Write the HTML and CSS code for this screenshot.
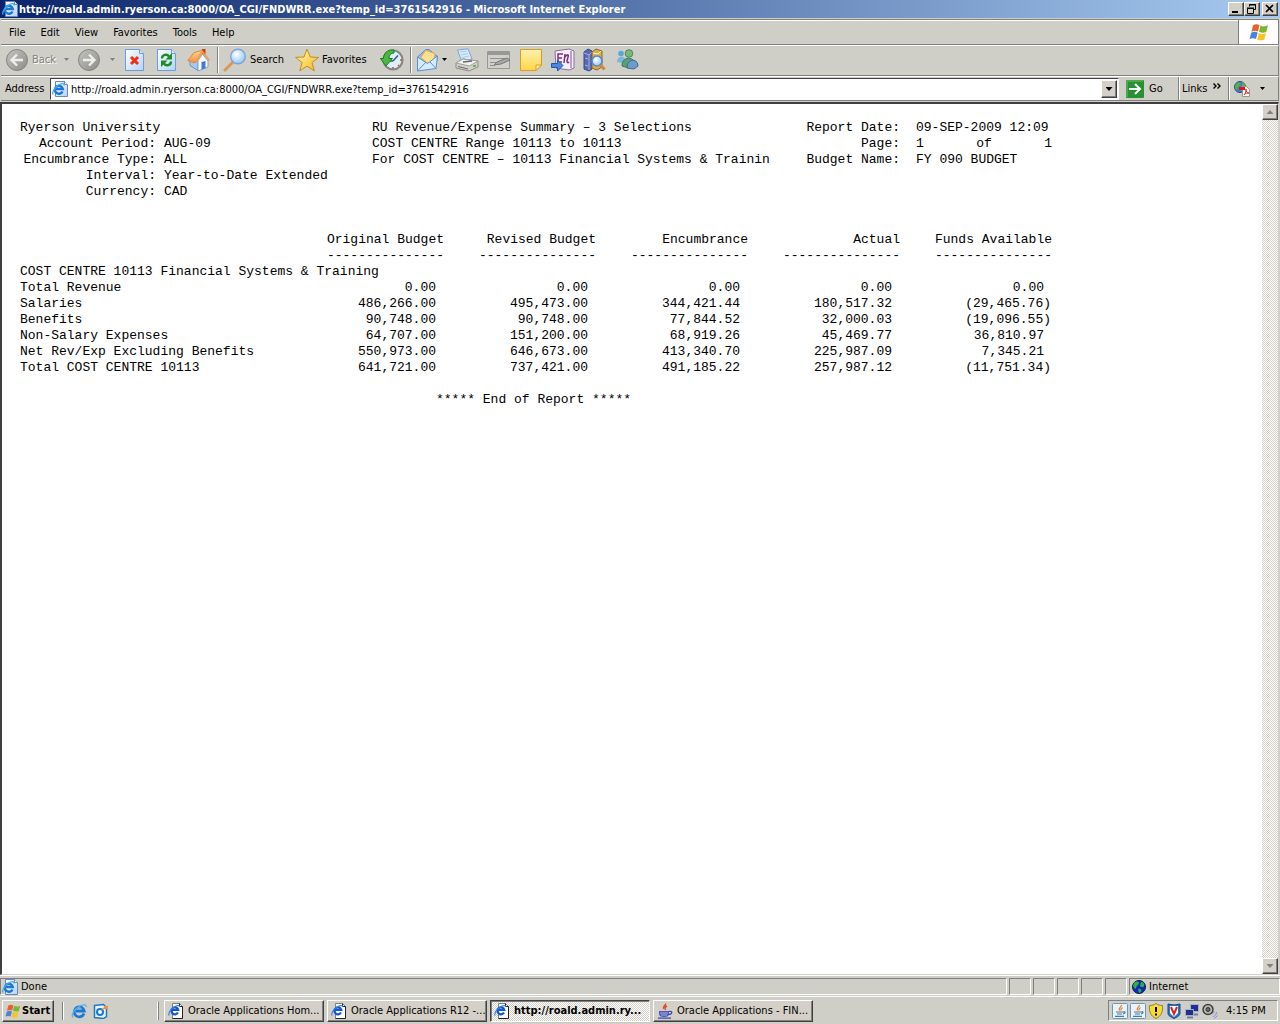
FILE: index.html
```html
<!DOCTYPE html>
<html lang="en">
<head>
<meta charset="utf-8">
<title>RU Revenue/Expense Summary - Microsoft Internet Explorer</title>
<link rel="stylesheet" href="styles.css">
</head>
<body>
<svg class="defs" aria-hidden="true">
  <defs>
    <linearGradient id="g-grey" x1="0" y1="0" x2="1" y2="1"><stop offset="0" stop-color="#c4c4c0"/><stop offset="1" stop-color="#8c8c88"/></linearGradient>
    <linearGradient id="g-page" x1="0" y1="0" x2="1" y2="1"><stop offset="0" stop-color="#fff"/><stop offset="1" stop-color="#b4d2fa"/></linearGradient>
    <linearGradient id="g-note" x1="0" y1="0" x2="0" y2="1"><stop offset="0" stop-color="#fff2b0"/><stop offset="1" stop-color="#ffd548"/></linearGradient>
    <linearGradient id="g-star" x1="0" y1="0" x2="1" y2="1"><stop offset="0" stop-color="#fffbb0"/><stop offset="1" stop-color="#f5b820"/></linearGradient>
    <linearGradient id="g-roof" x1="0" y1="0" x2="0" y2="1"><stop offset="0" stop-color="#ffd890"/><stop offset="1" stop-color="#f09040"/></linearGradient>
    <radialGradient id="g-lens" cx=".4" cy=".35" r=".7"><stop offset="0" stop-color="#fff"/><stop offset="1" stop-color="#8cc4f4"/></radialGradient>
  </defs>
  <symbol id="ie-e" viewBox="0 0 16 16">
    <path d="M13 10.500A5 5 0 1 1 13.200 8H5" fill="none" stroke="#1c78d8" stroke-width="2.800"/>
    <path d="M5 6.600A3.300 3.300 0 0 1 10.600 6" fill="none" stroke="#6cc0f8" stroke-width="1"/>
    <path d="M2 14.500C-.5 12 4 5 10 2.500c3-1.200 5.500-1 5 1.500" fill="none" stroke="#58b0f0" stroke-width="1.300"/>
  </symbol>
  <symbol id="ie-page" viewBox="0 0 16 16">
    <path d="M3.500.5h9l3 3v12h-12z" fill="url(#g-page)" stroke="#6888b8"/>
    <path d="M12.500.5v3h3" fill="#fff" stroke="#6888b8"/>
    <path d="M10.500 10.500A4 4 0 1 1 10.800 8H4" fill="none" stroke="#1c78d8" stroke-width="2.400"/>
    <path d="M1 13.500C-.5 11 4 5 8.500 3c3-1 4 0 3.500 1.500" fill="none" stroke="#40a8f0" stroke-width="1.300"/>
  </symbol>
  <symbol id="ie-task" viewBox="0 0 16 16">
    <path d="M4.500.5h7l3 3v12h-10z" fill="#fff" stroke="#808080"/>
    <path d="M11.500.5v3h3v12h-10" fill="none" stroke="#222"/>
    <path d="M10 9.500A3.500 3.500 0 1 1 10.300 7H4" fill="none" stroke="#1458d0" stroke-width="2.200"/>
    <path d="M1 12.500C0 9.500 4 4.500 8 3c3-1 4 0 3.500 1" fill="none" stroke="#2880f0" stroke-width="1.200"/>
  </symbol>
  <symbol id="flag" viewBox="0 0 20 18">
    <path d="M4 2.500C6 .8 8 .8 10.500 2L9 8.500C7 7.300 5 7.500 2.500 8.800z" fill="#e8602c"/>
    <path d="M11.500 2.500C14 3.700 16 3.700 19 2.300L17.300 9C15 10 12.500 10 10 8.800z" fill="#78b830"/>
    <path d="M2.200 9.800C4.500 8.500 6.500 8.500 8.700 9.600L7 16C5 15 3 15 .6 16z" fill="#4884dc"/>
    <path d="M9.800 10C12 11.200 14.500 11.300 17 10.200L15.300 16.500C13 17.800 10.500 17.500 8.200 16.400z" fill="#f8c420"/>
  </symbol>
  <symbol id="java-cup" viewBox="0 0 16 16">
    <path d="M8.500.5c1 2-3.500 3-2 5.500M10 3c-2 1-2.500 2-1.500 4" fill="none" stroke="#e04828" stroke-width="1.500"/>
    <path d="M2 8h10v2.500C12 13 10.500 14 7 14s-5-1-5-3.500z" fill="#4858b8"/>
    <path d="M3 10h8M4 12h6" stroke="#a8b0e8"/>
    <path d="M12 8.500c3.500-1 4 2.500-.5 3M1 15.200h13" fill="none" stroke="#3848a8" stroke-width="1.300"/>
  </symbol>
  <symbol id="java-tile" viewBox="0 0 16 16">
    <rect x=".5" y=".5" width="15" height="15" rx="1" fill="#e8f2f8" stroke="#6c98b8"/>
    <path d="M9.500 2c0 2-3.500 2.500-1.800 5.500M10.500 4.500C9 5.500 8.500 6 9 7.500" fill="none" stroke="#e88028" stroke-width="1.200"/>
    <path d="M4 9h7M5 11h5M3 13.300h9M11 9c3-.8 2.500 1.600 0 1.800" fill="none" stroke="#4878a0" stroke-width="1.200"/>
  </symbol>
</svg>

<header class="titlebar">
  <svg class="i16"><use href="#ie-page"/></svg>
  <h1>http://roald.admin.ryerson.ca:8000/OA_CGI/FNDWRR.exe?temp_id=3761542916 - Microsoft Internet Explorer</h1>
  <div class="winbtns">
    <button class="winbtn" aria-label="Minimize"><svg viewBox="0 0 12 10"><path d="M2 7h6v2H2z"/></svg></button>
    <button class="winbtn" aria-label="Restore"><svg viewBox="0 0 12 10"><path d="M3.500 2.500v-2h6v5h-2M3 1h7M1.500 4.500h6v5h-6zM1 4h7" fill="none" stroke="#000"/></svg></button>
    <button class="winbtn winclose" aria-label="Close"><svg viewBox="0 0 12 10"><path d="M2 1l7 7M9 1L2 8" stroke="#000" stroke-width="1.700"/></svg></button>
  </div>
</header>

<div class="menurow">
  <nav class="menus">
    <button>File</button><button>Edit</button><button>View</button><button>Favorites</button><button>Tools</button><button>Help</button>
  </nav>
  <div class="brand"><svg class="flag"><use href="#flag"/></svg></div>
</div>

<div class="toolbar">
  <div class="group">
    <button class="tool tool-back" disabled>
      <svg class="i24" viewBox="0 0 24 24"><circle cx="12" cy="12" r="10.500" fill="url(#g-grey)" stroke="#858580"/><path d="M18 12H7M12 6.500L6.500 12l5.500 5.500" fill="none" stroke="#eee" stroke-width="2.400"/></svg>
      <span>Back</span><i class="drop"></i></button>
    <button class="tool tool-fwd" disabled aria-label="Forward">
      <svg class="i24" viewBox="0 0 24 24"><circle cx="12" cy="12" r="10.500" fill="url(#g-grey)" stroke="#858580"/><path d="M6 12h11M12 6.500l5.500 5.500-5.500 5.500" fill="none" stroke="#eee" stroke-width="2.400"/></svg>
      <i class="drop"></i></button>
    <button class="tool" aria-label="Stop"><svg class="i24" viewBox="0 0 24 24"><path d="M2.500 1.500h14l4 4v17h-18z" fill="url(#g-page)" stroke="#6c9cdc"/><path d="M16.500 1.500v4h4" fill="#dce8fa" stroke="#6c9cdc"/><path d="M8 9l7 7M15 9l-7 7" stroke="#f03010" stroke-width="3"/></svg></button>
    <button class="tool" aria-label="Refresh"><svg class="i24" viewBox="0 0 24 24"><path d="M2.500 1.500h14l4 4v17h-18z" fill="url(#g-page)" stroke="#6c9cdc"/><path d="M16.500 1.500v4h4" fill="#dce8fa" stroke="#6c9cdc"/><path d="M7 10.500c0-4 5-5 7-2M16 13.500c0 4-5 5-7 2" fill="none" stroke="#189020" stroke-width="2.400"/><path d="M17 5v6.500h-6.500zM6 19v-6.500h6.500z" fill="#189020"/></svg></button>
    <button class="tool" aria-label="Home"><svg class="i24" viewBox="0 0 24 24"><path d="M15 1h3.500v6H15z" fill="#c83c20"/><path d="M3 11v6.500l8 5V11z" fill="#a8c8f0" stroke="#6c90c8"/><path d="M11 12.500L15.500 6l5.500 7v6l-10 4z" fill="#f4f9ff" stroke="#80a4d8"/><path d="M14.500 14l4-1v7.200l-4 1.500z" fill="#4878c8"/><path d="M.8 12.500L7 4.500l8-2.200-5.500 11.200L8 15z" fill="url(#g-roof)" stroke="#e0883c"/><path d="M10 13.500l5-10 7.500 9" fill="none" stroke="#f0a050" stroke-width="1.800"/></svg></button>
  </div>
  <div class="group">
    <button class="tool tool-search"><svg class="i24" viewBox="0 0 24 24"><path d="M2 22l8-8" stroke="#d89858" stroke-width="3" stroke-linecap="round"/><circle cx="15" cy="8.500" r="7.300" fill="url(#g-lens)" stroke="#7ca4d8" stroke-width="1.400"/></svg><span>Search</span></button>
    <button class="tool tool-fav"><svg class="i24" viewBox="0 0 24 24"><path d="M12 1l3.200 8 8.300.4-6.500 5.200 2.400 8.200L12 18.200l-7.200 4.600 2.300-8.200L.6 9.400 9 9z" fill="url(#g-star)" stroke="#c88c18"/></svg><span>Favorites</span></button>
    <button class="tool" aria-label="History"><svg class="i24" viewBox="0 0 24 24"><circle cx="13" cy="12" r="9.500" fill="#dcf0fc" stroke="#84888c" stroke-width="2.200"/><path d="M13 13l5-5.500M13 13h-3" stroke="#405880" stroke-width="1.500"/><path d="M20 12h2M13 19v2M18 17l1 1" stroke="#e04828" stroke-width="1.500"/><path d="M14 2C7 1 3.500 6 3.500 10.500H.3L6 18l6.500-7.500H9C9 7 11 5 14 5z" fill="#48b840" stroke="#207c20"/></svg></button>
  </div>
  <div class="group">
    <button class="tool tool-mail" aria-label="Mail"><svg class="i24" viewBox="0 0 24 24"><path d="M1.500 9L10 1.500h3L21 8v5H1.500z" fill="#8cbcf0" stroke="#5c90d0"/><path d="M5 9.500L9.500 2.500 19 5.500l-1 6-6 4z" fill="#ffe090" stroke="#e8b040"/><path d="M1.500 9v14L20 20.500 21.500 8 11.500 15.500z" fill="#d4eafe" stroke="#5c90d0"/><path d="M1.500 23l8.500-9M20 20.500l-6-6.500" stroke="#5c90d0"/></svg><i class="drop"></i></button>
    <button class="tool" aria-label="Print"><svg class="i24" viewBox="0 0 24 24"><path d="M2.500 2L13 .8 17 11 7 14z" fill="#d8eafc" stroke="#78a4e0"/><path d="M5 4l7-1M6 7l7-1.500M7 9.500l7-1.500" stroke="#a8c8f0"/><path d="M1 15l7-4 15 2v6l-9 4L1 20z" fill="#d0d0cc" stroke="#8c8c88"/><path d="M1 15l7-4 15 2-8.500 5z" fill="#f0f0ec" stroke="#a0a09c"/><path d="M8 14l9-1" stroke="#686868" stroke-width="1.500"/><path d="M3 18.500l10 2.500" stroke="#686868"/><path d="M18 18.500l3-1" stroke="#48b030" stroke-width="1.500"/></svg></button>
    <button class="tool" aria-label="Edit" disabled><svg class="i24" viewBox="0 0 24 24"><path d="M.5 3.500h22v17H.5z" fill="#d0d0cc" stroke="#989894"/><path d="M1 4h21v3H1z" fill="#989894"/><path d="M3 10.500h15M3 14.500h9M3 17.500h5" stroke="#90908c"/><path d="M7 17l3-3 10-4 3 2-9 4z" fill="#a8a8a4" stroke="#787874"/></svg></button>
    <button class="tool" aria-label="Note"><svg class="i24" viewBox="0 0 24 24"><path d="M1.500 1.500h21V17L17 22.500H1.500z" fill="url(#g-note)" stroke="#d8a020"/><path d="M17 22.500V17h5.500z" fill="#fff0a8" stroke="#d8a020"/></svg></button>
    <button class="tool" aria-label="OneNote"><svg class="i24" viewBox="0 0 24 24"><path d="M4 3l14-2 5 2v17l-5 2-13-2z" fill="#f4eef8" stroke="#8c6ca0"/><path d="M20 3v17" stroke="#b8a0c8" stroke-width="2"/><path d="M12 6H7v8h4M7 10h4M13 15l1-9M14 9c2-3 4-3 3 0l-1 4c0 2 1 2 2 1" fill="none" stroke="#783088" stroke-width="1.500"/><path d="M.5 15.500h6V12l5.500 5.500-5.500 5.500v-3.500h-6z" fill="#4888e0" stroke="#2058b0"/></svg></button>
    <button class="tool" aria-label="Research"><svg class="i24" viewBox="0 0 24 24"><path d="M1 4l4-3 4 2v18l-3 2-5-2z" fill="#5868b8" stroke="#384888"/><path d="M1 5l5 2 3-3M6 7v15M2 10l3 1M2 17l3 1" fill="none" stroke="#a8b4e8"/><path d="M9 4l4-3 6 2v16l-5 3-5-2z" fill="#d8ac50" stroke="#906820"/><path d="M10 5l5 1 3-3" fill="none" stroke="#fff0c0"/><circle cx="14" cy="13" r="5" fill="url(#g-lens)" stroke="#5888c0" stroke-width="1.500"/><path d="M17.500 17l4 4.500" stroke="#d08838" stroke-width="3"/></svg></button>
    <button class="tool" aria-label="Messenger"><svg class="i24" viewBox="0 0 24 24"><circle cx="6" cy="5.500" r="2.800" fill="#58a8d8"/><path d="M2 14c0-7 9-7 9 0l-4 1z" fill="#78b8d8"/><circle cx="14" cy="5.500" r="3.800" fill="#78b878" stroke="#508858"/><path d="M7 18c0-10 12-10 13-2l-6 4z" fill="#58a078" stroke="#407858"/><path d="M12 20c0-10 11-10 11-2l-4 3z" fill="#6c9cc8" stroke="#406898"/></svg></button>
  </div>
</div>

<form class="addressbar">
  <label class="address-label" for="url">Address</label>
  <div class="combo">
    <svg class="i16"><use href="#ie-page"/></svg>
    <input id="url" type="text" value="http://roald.admin.ryerson.ca:8000/OA_CGI/FNDWRR.exe?temp_id=3761542916">
    <button type="button" class="combo-btn" aria-label="Show addresses"><i class="drop"></i></button>
  </div>
  <button type="button" class="go"><svg class="i18" viewBox="0 0 18 18"><rect width="18" height="18" rx="1" fill="#289030"/><path d="M1 17V1h16" fill="none" stroke="#70c070"/><path d="M3 9h11M9 4l5 5-5 5" fill="none" stroke="#fff" stroke-width="2"/></svg><span>Go</span></button>
  <button type="button" class="links"><span>Links</span><svg class="chev" viewBox="0 0 8 6"><path d="M.5.5L3 3 .5 5.500M4.500.5L7 3 4.500 5.500" fill="none" stroke="#000" stroke-width="1.400"/></svg></button>
  <button type="button" class="pdf" aria-label="Convert to PDF"><svg class="i16" viewBox="0 0 16 16"><circle cx="6" cy="6" r="5.500" fill="#4080d0" stroke="#305078"/><path d="M2 3c2-2 4-2 4 0S3 6 3 9C1 8 0 5 2 3zM8 1c3 1 4 4 3 5L8 5z" fill="#58b040"/><path d="M8.500 5.500h4l3 3v7h-7z" fill="#fff" stroke="#989898"/><path d="M10 14c2-2 2-4 2-6 0 3 1 4 3 4-2 0-3 0-5 2z" fill="none" stroke="#e02818"/><path d="M5 6h6v3H5z" fill="#e01810"/></svg><i class="drop"></i></button>
</form>

<div class="viewport">
  <main class="report">
    <section class="summary">
      <dl class="params">
        <dt class="org">Ryerson University</dt>
        <dt>Account Period:</dt><dd>AUG-09</dd>
        <dt>Encumbrance Type:</dt><dd>ALL</dd>
        <dt>Interval:</dt><dd>Year-to-Date Extended</dd>
        <dt>Currency:</dt><dd>CAD</dd>
      </dl>
      <div class="heading">
        <p>RU Revenue/Expense Summary – 3 Selections</p>
        <p>COST CENTRE Range 10113 to 10113</p>
        <p>For COST CENTRE – 10113 Financial Systems &amp; Trainin</p>
      </div>
      <dl class="meta">
        <dt>Report Date:</dt><dd>09-SEP-2009 12:09</dd>
        <dt>Page:</dt><dd class="pages"><span>1</span><span>of</span><span>1</span></dd>
        <dt>Budget Name:</dt><dd>FY 090 BUDGET</dd>
      </dl>
    </section>
    <table class="figures">
      <colgroup><col class="c-name"><col class="c-num"><col class="c-num"><col class="c-num"><col class="c-num"><col class="c-num"></colgroup>
      <thead>
        <tr><td></td><th>Original Budget</th><th>Revised Budget</th><th>Encumbrance</th><th>Actual</th><th>Funds Available</th></tr>
        <tr class="rule"><td></td><td>---------------</td><td>---------------</td><td>---------------</td><td>---------------</td><td>---------------</td></tr>
      </thead>
      <tbody>
        <tr><th colspan="6">COST CENTRE 10113 Financial Systems &amp; Training</th></tr>
        <tr><th>Total Revenue</th><td>0.00</td><td>0.00</td><td>0.00</td><td>0.00</td><td>0.00</td></tr>
        <tr><th>Salaries</th><td>486,266.00</td><td>495,473.00</td><td>344,421.44</td><td>180,517.32</td><td class="neg">(29,465.76)</td></tr>
        <tr><th>Benefits</th><td>90,748.00</td><td>90,748.00</td><td>77,844.52</td><td>32,000.03</td><td class="neg">(19,096.55)</td></tr>
        <tr><th>Non-Salary Expenses</th><td>64,707.00</td><td>151,200.00</td><td>68,919.26</td><td>45,469.77</td><td>36,810.97</td></tr>
        <tr><th>Net Rev/Exp Excluding Benefits</th><td>550,973.00</td><td>646,673.00</td><td>413,340.70</td><td>225,987.09</td><td>7,345.21</td></tr>
        <tr><th>Total COST CENTRE 10113</th><td>641,721.00</td><td>737,421.00</td><td>491,185.22</td><td>257,987.12</td><td class="neg">(11,751.34)</td></tr>
      </tbody>
    </table>
    <p class="end">***** End of Report *****</p>
  </main>
  <div class="scrollbar">
    <button class="scrollbtn" disabled aria-label="Scroll up"><i class="arrow arrow-up"></i></button>
    <button class="scrollbtn" disabled aria-label="Scroll down"><i class="arrow"></i></button>
  </div>
</div>

<div class="statusbar">
  <div class="cell cell-main"><svg class="i16"><use href="#ie-page"/></svg><span>Done</span></div>
  <div class="cell"></div><div class="cell"></div><div class="cell"></div><div class="cell"></div><div class="cell"></div>
  <div class="cell cell-zone"><svg class="i14" viewBox="0 0 14 14"><circle cx="7" cy="7" r="6.500" fill="#1028c8" stroke="#082040"/><path d="M2 3c2-2 5-2 5 0S4 6 4 8 2 8 1 6zM9 2c2 0 4 2 3 4s-3 1-4 0zM6 9c3-1 4 1 3 3l-2 1z" fill="#30b040"/></svg><span>Internet</span></div>
</div>

<footer class="taskbar">
  <button class="start"><svg class="i16"><use href="#flag"/></svg><span>Start</span></button>
  <div class="quick">
    <button aria-label="Internet Explorer"><svg class="i16"><use href="#ie-e"/></svg></button>
    <button aria-label="Outlook"><svg class="i16" viewBox="0 0 16 16"><path d="M1.500 2.500l9-1 3 3v9l-3 2-9-1z" fill="#e8f4ff" stroke="#1878d0" stroke-width="1.500"/><circle cx="7" cy="9" r="3" fill="#fff" stroke="#1878d0" stroke-width="2"/><path d="M8 7l4-4h3v3h-3z" fill="#f89030"/></svg></button>
  </div>
  <nav class="tasks">
    <button class="task"><svg class="i16"><use href="#ie-task"/></svg><span>Oracle Applications Hom...</span></button>
    <button class="task"><svg class="i16"><use href="#ie-task"/></svg><span>Oracle Applications R12 -...</span></button>
    <button class="task active"><svg class="i16"><use href="#ie-task"/></svg><span>http://roald.admin.ry...</span></button>
    <button class="task"><svg class="i16"><use href="#java-cup"/></svg><span>Oracle Applications - FIN...</span></button>
  </nav>
  <div class="tray">
    <svg class="i16"><use href="#java-tile"/></svg>
    <svg class="i16"><use href="#java-tile"/></svg>
    <svg class="i16" viewBox="0 0 16 16"><path d="M8 .5c2 1.500 4 2 6.500 2 .5 6-1 10.500-6.500 13C2.500 13 1 8.500 1.500 2.500 4 2.500 6 2 8 .5z" fill="#f8dc28" stroke="#88804c"/><path d="M8 4v5M8 10.500v2" stroke="#000" stroke-width="2"/></svg>
    <svg class="i16" viewBox="0 0 16 16"><path d="M2 1l6 1 6-1v9c0 3-3 4-6 5.500C5 14 2 13 2 10z" fill="#2878c8" stroke="#104888"/><path d="M4 3h8v7l-4 4-4-4z" fill="#fff"/><path d="M5 4l3 7 3-7" fill="none" stroke="#d82020" stroke-width="2"/></svg>
    <svg class="i16" viewBox="0 0 16 16"><path d="M6.500 1.500h8v7h-8z" fill="#203090" stroke="#a8b0c8"/><path d="M1.500 6.500h8v6h-8z" fill="#203090" stroke="#a8b0c8"/><path d="M3 14.500h6M10 11.500h4" stroke="#787ca0" stroke-width="2"/></svg>
    <svg class="i16" viewBox="0 0 16 16"><circle cx="6" cy="6.500" r="5" fill="#b8b8b8" stroke="#404040" stroke-width="1.500"/><circle cx="6" cy="6.500" r="2" fill="#686868" stroke="#303030"/><path d="M10 11c1 0 2-1 2-3M11 13.500c2 0 3.500-2 3.500-4.500M12.500 15.500l3-3" fill="none" stroke="#8890e0"/></svg>
    <time>4:15 PM</time>
  </div>
</footer>
</body>
</html>
```
FILE: styles.css
```css
* { box-sizing: border-box; }

:root {
  --face: #d0cfc7;
  --shadow: #808080;
  --dark: #404040;
  --dither: repeating-conic-gradient(#fff 0 25%, #d4d0c8 0 50%) 0 0 / 2px 2px;
}

body {
  margin: 0;
  min-height: 100vh;
  display: flex;
  flex-direction: column;
  background: var(--face);
  color: #000;
  font: 11px/13px "DejaVu Sans Condensed", "Noto Sans", sans-serif;
}

button, input {
  margin: 0;
  padding: 0;
  border: 0;
  background: none;
  color: inherit;
  font: inherit;
  white-space: nowrap;
}

svg { display: block; flex: none; }
.defs { position: absolute; width: 0; height: 0; }
.i14 { width: 14px; height: 14px; }
.i16 { width: 16px; height: 16px; }
.i18 { width: 18px; height: 18px; }
.i24 { width: 24px; height: 24px; }

.drop {
  width: 5px;
  height: 3px;
  background: currentColor;
  clip-path: polygon(0 0, 100% 0, 50% 100%);
}

/* Title bar */
.titlebar {
  display: flex;
  align-items: center;
  gap: 1px;
  height: 18px;
  padding: 0 2px;
  background: linear-gradient(to right, #0a246a, #a6caf0);
  color: #fff;
}
.titlebar h1 {
  flex: 1;
  margin: 0;
  font-size: 11px;
  font-weight: bold;
  white-space: nowrap;
  overflow: hidden;
}
.winbtns { display: flex; }
.winbtn, .combo-btn, .scrollbtn {
  display: flex;
  align-items: center;
  justify-content: center;
  width: 16px;
  height: 14px;
  background: #d4d0c8;
  border: 1px solid;
  border-color: #fff var(--dark) var(--dark) #fff;
  box-shadow: inset -1px -1px var(--shadow);
}
.winbtn svg { width: 12px; height: 10px; }
.winclose { margin-left: 2px; }

/* Menu row */
.menurow {
  display: flex;
  height: 26px;
  margin: 1px 1px 0;
  border: 1px solid var(--shadow);
  border-width: 1px 1px 1px 0;
  box-shadow: inset 0 1px #fff;
}
.menus { display: flex; flex: 1; align-items: center; gap: 15px; padding-left: 8px; }
.brand {
  display: flex;
  align-items: center;
  justify-content: center;
  width: 40px;
  background: #fff;
  border-left: 1px solid var(--shadow);
}
.flag { width: 20px; height: 18px; }

/* Toolbar */
.toolbar {
  display: flex;
  align-items: center;
  height: 31px;
  margin: 0 1px;
  padding-bottom: 2px;
  border-top: 1px solid #fff;
  border-right: 1px solid var(--shadow);
  border-bottom: 1px solid var(--shadow);
}
.group { display: flex; gap: 8px; padding: 0 6px 0 4px; }
.group + .group {
  border-left: 1px solid var(--shadow);
  box-shadow: inset 1px 0 #fff;
  padding-left: 5px;
}
.tool { display: flex; align-items: center; gap: 3px; height: 26px; min-width: 24px; }
.tool:disabled { color: var(--shadow); text-shadow: 1px 1px #fff; }
.tool .drop { margin-left: auto; }
.tool-back { width: 64px; }
.tool-fwd { width: 38px; }
.tool-search { width: 64px; }
.tool-fav { width: 77px; }
.tool-mail { width: 31px; gap: 0; }

/* Address bar */
.addressbar {
  display: flex;
  height: 25px;
  margin: 0 1px;
  border-top: 1px solid #fff;
  border-right: 1px solid var(--shadow);
  border-bottom: 1px solid var(--shadow);
}
.address-label { width: 49px; padding: 5px 0 0 4px; }
.combo {
  display: flex;
  flex: 1;
  align-items: center;
  height: 22px;
  margin-top: 1px;
  padding-left: 1px;
  background: #fff;
  border: 1px solid;
  border-color: var(--dark) #fff #fff var(--dark);
}
.combo input { flex: 1; min-width: 0; height: 18px; padding-left: 3px; outline: 0; }
.combo-btn { width: 16px; height: 18px; margin-right: 1px; }
.combo-btn .drop { width: 7px; height: 4px; }
.go, .links, .pdf { display: flex; align-items: center; }
.go { width: 59px; gap: 5px; padding-left: 7px; }
.links, .pdf { border-left: 1px solid var(--shadow); box-shadow: inset 1px 0 #fff; }
.links { width: 50px; gap: 6px; padding-left: 3px; }
.chev { width: 8px; height: 6px; margin-bottom: 6px; }
.pdf { width: 50px; gap: 10px; padding-left: 5px; }

/* Page view */
.viewport {
  display: flex;
  flex: 1;
  margin: 1px 1px 0 0;
  background: #fff;
  border: solid;
  border-width: 2px 1px 1px 2px;
  border-color: var(--dark) #d4d0c8 #d4d0c8 var(--dark);
}
.report {
  flex: 1;
  padding: 16px 0 16px 18px;
  font: 13px/16px "Liberation Mono", monospace;
  white-space: nowrap;
}
.report p, .report dl, .report dd { margin: 0; }
.summary { display: grid; grid-template-columns: 352px 400px 280px; margin-bottom: 32px; }
.params, .meta { display: grid; align-content: start; column-gap: 8px; }
.params { grid-template-columns: 136px 1fr; }
.meta { grid-template-columns: 128px 136px; column-gap: 16px; }
.params dt, .meta dt { text-align: right; }
.params .org { grid-column: 1 / -1; text-align: left; }
.pages { display: flex; justify-content: space-between; }

.figures { width: 1032px; table-layout: fixed; border-collapse: collapse; }
.figures th, .figures td { height: 16px; padding: 0; font-weight: normal; text-align: right; }
.figures tbody th { text-align: left; }
.figures tbody td { padding-right: 8px; }
.figures tbody .neg { padding-right: 1px; }
.c-name { width: 272px; }
.c-num { width: 152px; }
.report .end { margin-top: 16px; padding-left: 416px; }

.scrollbar {
  display: flex;
  flex-direction: column;
  justify-content: space-between;
  width: 16px;
  background: var(--dither);
}
.scrollbtn { height: 16px; }
.arrow { width: 7px; height: 4px; background: var(--shadow); clip-path: polygon(0 0, 100% 0, 50% 100%); }
.arrow-up { clip-path: polygon(50% 0, 100% 100%, 0 100%); }

/* Status bar */
.statusbar { display: flex; gap: 2px; height: 21px; padding: 2px 0 1px; border-top: 1px solid #fff; }
.cell {
  display: flex;
  align-items: center;
  gap: 3px;
  width: 22px;
  padding-left: 1px;
  border: 1px solid;
  border-color: var(--shadow) #fff #fff var(--shadow);
}
.cell-main { flex: 1; }
.cell-zone { width: 151px; padding-left: 2px; }

/* Taskbar */
.taskbar {
  display: flex;
  align-items: center;
  height: 28px;
  padding: 0 2px;
  border-top: 1px solid #fff;
}
.start, .task {
  display: flex;
  align-items: center;
  gap: 4px;
  height: 22px;
  padding: 0 3px;
  background: #d4d0c8;
  border: 1px solid;
  border-color: #fff var(--dark) var(--dark) #fff;
  box-shadow: inset -1px -1px var(--shadow);
}
.start { width: 52px; gap: 1px; padding: 0 2px; font-weight: bold; }
.quick {
  display: flex;
  align-items: center;
  gap: 6px;
  width: 97px;
  height: 18px;
  margin-left: 8px;
  padding-left: 8px;
  border: solid;
  border-width: 0 1px 0 1px;
  border-color: #fff var(--shadow) #fff var(--shadow);
  box-shadow: inset 1px 0 #fff, inset -1px 0 #fff;
}
.tasks { display: flex; flex: 1; gap: 3px; padding-left: 5px; }
.task { width: 160px; }
.task.active {
  background: var(--dither);
  border-color: var(--dark) #fff #fff var(--dark);
  box-shadow: inset 1px 1px var(--shadow);
  font-weight: bold;
}
.tray {
  display: flex;
  align-items: center;
  gap: 2px;
  width: 170px;
  height: 21px;
  padding-left: 3px;
  border: 1px solid;
  border-color: var(--shadow) #fff #fff var(--shadow);
}
.tray time { margin-left: 6px; }
```
